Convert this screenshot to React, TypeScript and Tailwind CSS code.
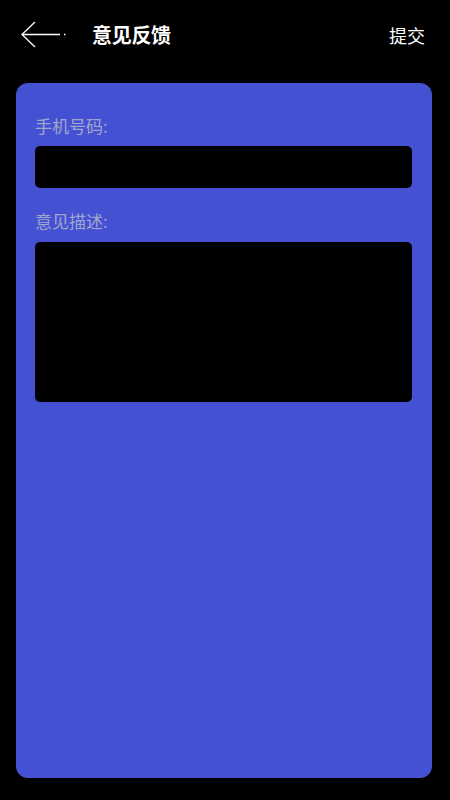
const font = { fontFamily: '"Noto Sans CJK SC", "Noto Sans", sans-serif' };

function BackArrow() {
    return (
        <svg width="48" height="30" viewBox="0 0 48 30" fill="none" stroke="white" strokeWidth="1.3">
            <path d="M14 2 L1 14.5 L14 27" />
            <path d="M1 14.5 H39" />
            <path d="M43 14.5 H44.5" strokeWidth="1.6" />
        </svg>
    );
}

export default function App() {
    return (
        <div className="min-h-screen w-full bg-black flex flex-col" style={font}>
            {/* Top bar */}
            <div className="h-[70px] flex items-center pl-[21px] pr-[25px]">
                <BackArrow />
                <div className="ml-[23px] text-white text-[20px] font-bold tracking-[-0.3px]">意见反馈</div>
                <div className="ml-auto text-white text-[18px]">提交</div>
            </div>

            {/* Form card */}
            <div className="mt-[13px] ml-[16px] mr-[18px] h-[695px] rounded-[12px] bg-[#4451d3] pt-[31px] pl-[19px] pr-[20px]">
                <div className="text-[17px] leading-6 text-[#a3a6cc]">手机号码:</div>
                <div className="mt-[8px] h-[42px] rounded-[5px] bg-black" />
                <div className="mt-[21px] text-[17px] leading-6 text-[#a3a6cc]">意见描述:</div>
                <div className="mt-[9px] h-[160px] rounded-[5px] bg-black" />
            </div>
        </div>
    );
}
